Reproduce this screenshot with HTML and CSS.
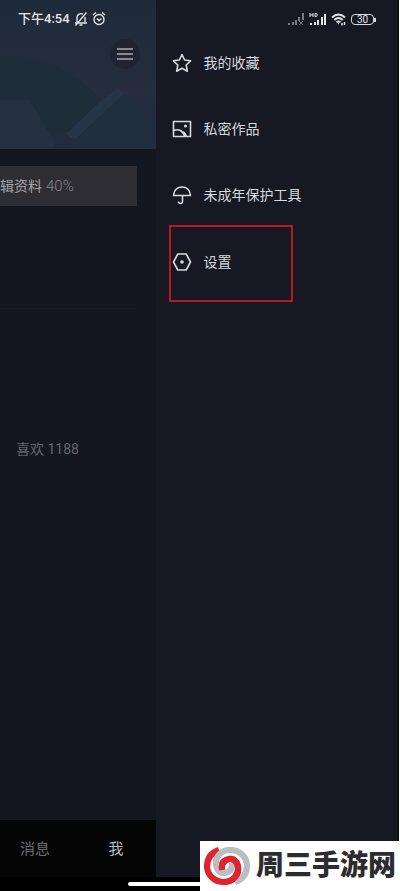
FILE: index.html
```html
<!DOCTYPE html>
<html lang="zh-CN">
<head>
<meta charset="utf-8">
<meta name="viewport" content="width=device-width, initial-scale=1">
<title>我</title>
<link rel="stylesheet" href="styles.css">
</head>
<body>
<div class="phone">
  <header class="status">
    <div class="status-group">
      <span>下午4:54</span>
      <svg width="14" height="16" viewBox="0 0 14 16" fill="none" stroke="currentColor" stroke-width="1.4"><path d="M3 11V6.500a4 4 0 0 1 6-3.300M11 6v5M1 12h12M1.500 14.500L12.500 1.500M5.500 14h3"/></svg>
      <svg width="14" height="16" viewBox="0 0 14 16" fill="none" stroke="currentColor" stroke-width="1.400"><circle cx="7" cy="8.500" r="5"/><path d="M1 4l3-2.500M13 4l-3-2.500M4.800 7.500L7 9.500l2.500-2"/></svg>
    </div>
    <div class="status-group">
      <svg width="17" height="14" viewBox="0 0 17 14" fill="#777985"><path d="M0 11h2v2H0zM4 10h2v3H4zM7 8h2v5H7zM10 5h2v4h-2zM14 1h2v7h-2z"/><path d="M11 9l4 4M15 9l-4 4" stroke="#777985"/></svg>
      <svg width="18" height="14" viewBox="0 0 18 14" fill="currentColor"><path d="M1 11h2v2H1zM5 10h2v3H5zM8 8h2v5H8zM12 5h2v8h-2zM15 2h2v11h-2z"/><path d="M1 1v4M4 1v4M1 3h3M6 1.500h1.500q1.500 1.500 0 3H6z" fill="none" stroke="currentColor"/></svg>
      <svg width="16" height="14" viewBox="0 0 16 14" fill="none" stroke="currentColor" stroke-width="1.800"><path d="M1 5.500q6.500-6 13 0M3.300 8q4.200-4 8.400 0M5.500 10.300q2-1.800 4 0"/><path d="M7 11.500h1M11 11v2.500M13.500 10v3" stroke-width="1.500"/></svg>
      <span class="battery">30</span>
    </div>
  </header>
  <div class="screen">
    <main class="profile">
      <div class="cover">
        <svg class="cover-art" viewBox="0 0 156 149" preserveAspectRatio="none"><path d="M0 58C45 55 86 78 101 101L66 134H54L35 122L0 100z" fill="#1f2c3a"/><path d="M0 100H30L54 141V149H0z" fill="#242f40"/><path d="M101 101L118 88L124 94L75 140L66 134z" fill="#253446"/><path d="M124 94L156 120V149H66z" fill="#202e40"/></svg>
        <button class="menu-button" aria-label="菜单"><svg width="16" height="14" viewBox="0 0 16 14" stroke="#a9aaaf" stroke-width="1.500"><path d="M0 2h16M0 7h16M0 12h16"/></svg></button>
      </div>
      <button class="edit"><span>辑资料</span> <small>40%</small></button>
      <hr class="rule">
      <a class="likes" href="#likes">喜欢 1188</a>
      <nav class="tabs"><a href="#messages">消息</a><a class="active" href="#me">我</a></nav>
    </main>
    <nav class="drawer">
      <a href="#favorites"><svg viewBox="0 0 20 20"><path d="M10 1.500l2.600 5.500 6 .8-4.400 4.200 1.100 6.200-5.300-2.900-5.300 2.900 1.100-6.200L1.400 7.800l6-.8z"/></svg>我的收藏</a>
      <a href="#private"><svg viewBox="0 0 20 20"><path d="M1.500 2.500h17v15h-17zM1.500 11.500c5-2 9.500 0 11.500 6M9 13c2-1 4 .5 5.500 4.500"/><circle class="dot" cx="13.500" cy="7" r="1.500"/></svg>私密作品</a>
      <a href="#guard"><svg viewBox="0 0 20 20"><path d="M1.500 10.500C2 5 5.500 2 10 2s8 3 8.500 8.500zM10.500 10.500v6q0 2-2 2t-2-2"/></svg>未成年保护工具</a>
      <a class="marked" href="#settings"><svg viewBox="0 0 20 20"><path d="M5.800 2h8.400l4.300 8-4.300 8H5.800l-4.300-8z"/><circle class="dot" cx="10" cy="10" r="1.800"/></svg>设置</a>
    </nav>
  </div>
  <footer class="home"><span></span></footer>
  <aside class="brand">
    <svg width="46" height="38" viewBox="0 0 46 38" fill="none" stroke-width="6.200"><path d="M15 3C6 6 3 12 3 20C4 30 12 35 20 35C29 35 35 28 34 20C33 14 29 11 25 12C20 13 17 16 18 23" stroke="#e2222c"/><path d="M15 3C6 6 3 12 3 20C4 30 12 35 20 35C29 35 35 28 34 20C33 14 29 11 25 12C20 13 17 16 18 23" stroke="#b9bec3" transform="rotate(180 23 19)"/><path d="M20 35C29 35 35 28 34 20C33 14 29 11 25 12C20 13 17 16 18 23" stroke="#e2222c"/></svg>
    <strong>周三手游网</strong>
  </aside>
</div>
</body>
</html>
```
FILE: styles.css
```css
* { box-sizing: border-box; }
body { margin: 0; background: #161823; font-family: Roboto, "Noto Sans CJK SC", sans-serif; font-size: 14px; line-height: 20px; color: #d8d9de; }
a { color: inherit; text-decoration: none; }
button { font: inherit; border: 0; }
svg { display: block; flex: none; }
.phone { position: relative; min-height: 100vh; display: flex; flex-direction: column; border-right: 1px solid #fff; overflow: hidden; }
.status { position: absolute; z-index: 1; top: 9px; left: 18px; right: 23px; display: flex; justify-content: space-between; font-size: 13px; font-weight: 500; color: #e3e5e9; }
.status-group { display: flex; align-items: center; gap: 4px; }
.status-group span { white-space: nowrap; }
.battery { position: relative; width: 23px; height: 11px; border: 1px solid #d8d9de; border-radius: 4px; font-size: 10px; line-height: 9px; font-weight: 400; text-align: center; margin-right: 2px; }
.battery::after { content: ""; position: absolute; right: -3px; top: 3px; width: 2px; height: 4px; background: #d8d9de; }
.screen { flex: 1; display: grid; grid-template-columns: 39% 1fr; }
.profile { display: flex; flex-direction: column; align-items: flex-start; background: #14171f; min-width: 0; }
.cover { position: relative; width: 100%; height: 149px; padding: 39px 16px 0; background: linear-gradient(#1e2a3a, #252d3e 60%, #202d3e); display: flex; justify-content: flex-end; align-items: flex-start; }
.cover-art { position: absolute; inset: 0; width: 100%; height: 100%; }
.menu-button { position: relative; display: grid; place-items: center; width: 30px; height: 30px; padding: 0; border-radius: 50%; background: #202432; }
.edit { align-self: stretch; display: flex; align-items: center; gap: 4px; height: 40px; margin: 17px 19px 0 0; padding: 0; background: #2d2d33; color: #a4a4a8; white-space: nowrap; }
.edit small { font-size: 15px; font-weight: 300; color: #85858b; }
.rule { width: 88%; height: 1px; margin: 102px 0 0; border: 0; background: #191b23; }
.likes { margin: 130px 0 0 16px; color: #64666e; }
.tabs { width: 100%; height: 57px; margin-top: auto; padding: 0 32px 0 20px; display: flex; align-items: center; justify-content: space-between; background: #050506; color: #6c6c6e; font-size: 15px; }
.tabs .active { color: #bcbcbe; }
.drawer { display: flex; flex-direction: column; align-items: flex-start; gap: 26px; padding: 43px 13px; border-right: 2px solid #10121a; }
.drawer a { display: flex; align-items: center; gap: 12px; height: 40px; padding: 0 3px; }
.drawer svg { width: 20px; height: 20px; fill: none; stroke: currentColor; stroke-width: 1.6; stroke-linejoin: round; }
.drawer .dot { fill: currentColor; stroke: none; }
.drawer .marked { width: 124px; height: 77px; margin-top: -16px; padding: 0 1px 3px; border: 2px solid #b51a20; }
.home { height: 14px; background: #000; display: flex; justify-content: center; align-items: center; }
.home span { width: 36%; height: 4px; border-radius: 2px; background: #fff; }
.brand { position: absolute; right: 0; bottom: 0; width: 199px; height: 50px; padding-left: 4px; display: flex; align-items: center; gap: 6px; background: #fff; color: #2c2d2f; }
.brand strong { font-size: 28px; line-height: 40px; font-weight: 900; white-space: nowrap; }
```
